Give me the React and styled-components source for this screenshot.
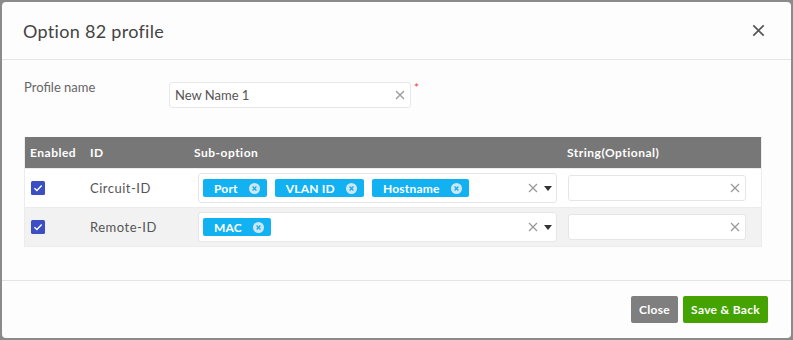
import React from 'react';
import styled, { createGlobalStyle } from 'styled-components';

const GlobalStyle = createGlobalStyle`
  html, body {
    margin: 0;
    padding: 0;
    background: #8b8b8b;
  }
  * { box-sizing: border-box; }
`;

const rows = [
  { id: 'Circuit-ID', tags: ['Port', 'VLAN ID', 'Hostname'], shade: false },
  { id: 'Remote-ID', tags: ['MAC'], shade: true },
];

const Clear = ({ size = 10, color = '#9a9a9a' }) => (
  <svg width={size} height={size} viewBox="0 0 10 10">
    <path d="M1 1 L9 9 M9 1 L1 9" stroke={color} strokeWidth="1.3" fill="none" />
  </svg>
);

const TagClose = () => (
  <svg width="11" height="11" viewBox="0 0 11 11">
    <circle cx="5.5" cy="5.5" r="5.5" fill="#cfe6f2" />
    <path d="M3.6 3.6 L7.4 7.4 M7.4 3.6 L3.6 7.4" stroke="#12b1f2" strokeWidth="1.4" />
  </svg>
);

const Check = () => (
  <svg width="14" height="14" viewBox="0 0 14 14">
    <rect width="14" height="14" rx="1.5" fill="#3c4fc2" />
    <path d="M3.4 7.2 L5.9 9.6 L10.7 4.6" stroke="#fff" strokeWidth="1.4" fill="none" />
  </svg>
);

const App = () => {
  return (
    <>
      <GlobalStyle />
      <Backdrop>
        <Modal>
          <Header>
            <Title>Option 82 profile</Title>
            <CloseIcon>
              <Clear size={13} color="#555" />
            </CloseIcon>
          </Header>
          <Body>
            <FieldRow>
              <Label>Profile name</Label>
              <Input>
                <span>New Name 1</span>
                <Clear />
              </Input>
              <Required>*</Required>
            </FieldRow>
            <Table>
              <HeadRow>
                <HeadCell>Enabled</HeadCell>
                <HeadCell>ID</HeadCell>
                <HeadCell>Sub-option</HeadCell>
                <HeadCell>String(Optional)</HeadCell>
              </HeadRow>
              {rows.map((r) => (
                <Row key={r.id} $shade={r.shade}>
                  <CheckCell><Check /></CheckCell>
                  <IdCell>{r.id}</IdCell>
                  <SelectCell>
                    <Select>
                      <Tags>
                        {r.tags.map((t) => (
                          <Tag key={t}>
                            {t}
                            <TagClose />
                          </Tag>
                        ))}
                      </Tags>
                      <SelectIcons>
                        <Clear />
                        <Caret />
                      </SelectIcons>
                    </Select>
                  </SelectCell>
                  <StringCell>
                    <StringInput>
                      <Clear />
                    </StringInput>
                  </StringCell>
                </Row>
              ))}
            </Table>
          </Body>
          <Footer>
            <Button $color="#7f7f7f">Close</Button>
            <Button $color="#44a300">Save &amp; Back</Button>
          </Footer>
        </Modal>
      </Backdrop>
    </>
  );
};

const Backdrop = styled.div`
  width: 793px;
  height: 340px;
  padding: 2px;
  font-family: Lato, "Noto Sans", sans-serif;
`;

const Modal = styled.div`
  width: 789px;
  height: 336px;
  background: #fdfdfd;
  border-radius: 4px;
  display: flex;
  flex-direction: column;
`;

const Header = styled.div`
  height: 58px;
  padding: 0 26px 0 21px;
  border-bottom: 1px solid #e4e4e4;
  display: flex;
  align-items: center;
  justify-content: space-between;
`;

const Title = styled.div`
  font-size: 18px;
  color: #444;
  letter-spacing: 0.3px;
`;

const CloseIcon = styled.div`
  display: flex;
  cursor: pointer;
`;

const Body = styled.div`
  height: 221px;
  padding: 20px 0 0 22px;
  border-bottom: 1px solid #e4e4e4;
`;

const FieldRow = styled.div`
  display: flex;
  align-items: flex-start;
`;

const Label = styled.div`
  width: 145px;
  font-size: 13px;
  color: #666;
  margin-top: -1px;
`;

const Input = styled.div`
  width: 242px;
  height: 26px;
  margin-top: 2px;
  border: 1px solid #e8e8e8;
  border-radius: 3px;
  background: #fff;
  padding: 0 5px;
  display: flex;
  align-items: center;
  justify-content: space-between;
  font-size: 13px;
  color: #555;
`;

const Required = styled.div`
  color: #f0403c;
  font-size: 12px;
  margin-left: 3px;
`;

const Table = styled.div`
  width: 738px;
  margin-top: 29px;
  border: 1px solid #ececec;
  border-top: none;
  letter-spacing: 0.5px;
`;

const Grid = styled.div`
  display: grid;
  grid-template-columns: 60px 104px 373px 199px;
  align-items: center;
`;

const HeadRow = styled(Grid)`
  height: 31px;
  background: #777;
`;

const HeadCell = styled.div`
  padding-left: 5px;
  color: #fff;
  font-size: 12px;
  font-weight: 700;
`;

const Row = styled(Grid)`
  height: 39px;
  background: ${(p) => (p.$shade ? '#f2f2f2' : '#fff')};
  border-top: 1px solid #ececec;
`;

const CheckCell = styled.div`
  padding-left: 6px;
  display: flex;
`;

const IdCell = styled.div`
  padding-left: 5px;
  font-size: 13px;
  color: #555;
`;

const SelectCell = styled.div`
  padding: 0 5px 0 9px;
`;

const Select = styled.div`
  height: 30px;
  background: #fff;
  border: 1px solid #e6e6e6;
  border-radius: 3px;
  display: flex;
  align-items: center;
  justify-content: space-between;
  padding: 0 4px 0 4px;
`;

const Tags = styled.div`
  display: flex;
  gap: 8px;
`;

const Tag = styled.div`
  height: 18px;
  background: #12b1f2;
  color: #fff;
  font-size: 12px;
  font-weight: 700;
  letter-spacing: 0.2px;
  border-radius: 2px;
  display: flex;
  align-items: center;
  gap: 11px;
  padding: 0 7px 0 11px;
`;

const SelectIcons = styled.div`
  display: flex;
  align-items: center;
  gap: 6px;
`;

const Caret = styled.div`
  width: 0;
  height: 0;
  border-left: 4.5px solid transparent;
  border-right: 4.5px solid transparent;
  border-top: 5px solid #333;
`;

const StringCell = styled.div`
  padding-left: 6px;
`;

const StringInput = styled.div`
  width: 178px;
  height: 26px;
  background: #fff;
  border: 1px solid #e6e6e6;
  border-radius: 3px;
  display: flex;
  align-items: center;
  justify-content: flex-end;
  padding-right: 5px;
`;

const Footer = styled.div`
  flex: 1;
  display: flex;
  justify-content: flex-end;
  align-items: flex-start;
  gap: 5px;
  padding: 15px 23px 0 0;
`;

const Button = styled.button`
  height: 27px;
  border: none;
  border-radius: 2px;
  background: ${(p) => p.$color};
  color: #fff;
  font-family: Lato, "Noto Sans", sans-serif;
  font-size: 12px;
  font-weight: 700;
  letter-spacing: 0.3px;
  padding: 0 8px;
  cursor: pointer;
`;

export default App;
